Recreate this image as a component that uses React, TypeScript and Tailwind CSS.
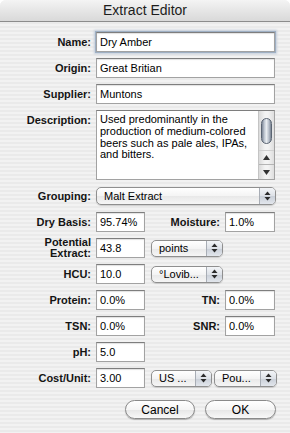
import React from 'react';

const Label = ({ children, w = 'w-[91px]' }: { children: React.ReactNode; w?: string }) => (
    <div className={`${w} shrink-0 text-right text-[11px] font-bold text-[#141414] leading-[13px]`}>{children}</div>
);

const Field = ({ value, w = 'w-[179px]', focus = false }: { value: string; w?: string; focus?: boolean }) => (
    <div
        className={`${w} h-[20px] shrink-0 bg-white border border-[#a2a2a2] border-t-[#7e7e7e] px-[3px] flex items-center text-[11px] text-black whitespace-nowrap overflow-hidden ${focus ? 'shadow-[inset_0_1px_1px_rgba(0,0,0,0.12),0_0_0_1px_#9fb0c4,0_0_2px_2px_#c3cedb]' : 'shadow-[inset_0_1px_1px_rgba(0,0,0,0.12)]'}`}
    >
        {value}
    </div>
);

const Arrows = () => (
    <svg width="7" height="10" viewBox="0 0 7 10">
        <path d="M3.5 0.5 L6.5 4 L0.5 4 Z" fill="#2b2b2b" />
        <path d="M0.5 6 L6.5 6 L3.5 9.5 Z" fill="#2b2b2b" />
    </svg>
);

const Popup = ({ value, w, h = 'h-[17px]' }: { value: string; w: string; h?: string }) => (
    <div
        className={`${w} ${h} shrink-0 flex rounded-[5px] border border-[#8f8f8f] overflow-hidden bg-[linear-gradient(#ffffff,#f4f4f4_50%,#e8e8e8_51%,#f6f6f6)] shadow-[0_1px_1px_rgba(0,0,0,0.15)]`}
    >
        <div className="flex-1 pl-[7px] flex items-center text-[11px] text-black whitespace-nowrap overflow-hidden">{value}</div>
        <div className="w-[16px] border-l border-[#a8adb5] flex items-center justify-center bg-[linear-gradient(#f2f4f7,#dde1e7_50%,#c9cfd8_51%,#e2e6ec)]">
            <Arrows />
        </div>
    </div>
);

const Button = ({ label, w }: { label: string; w: string }) => (
    <div
        className={`${w} h-[19px] rounded-full border border-[#8a8a8a] flex items-center justify-center text-[12px] text-black bg-[linear-gradient(#ffffff,#f5f5f5_50%,#e6e6e6_51%,#f8f8f8)] shadow-[0_1px_1px_rgba(0,0,0,0.25)]`}
    >
        {label}
    </div>
);

export default function App() {
    return (
        <div className="w-[290px] h-[433px] bg-white font-['Liberation_Sans',Arial,sans-serif]">
            <div className="h-full rounded-t-[6px] overflow-hidden flex flex-col bg-[repeating-linear-gradient(180deg,#f2f2f2_0px,#f2f2f2_2px,#eaeaea_2px,#eaeaea_4px)]">
                {/* Title bar */}
                <div className="h-[22px] shrink-0 border-b border-[#8c8c8c] flex items-center justify-center text-[14px] text-[#1c1c1c] bg-[linear-gradient(#f4f4f4,#e6e6e6_50%,#d9d9d9)]">
                    Extract Editor
                </div>

                <div className="flex flex-col gap-[6px] pt-[10px]">
                    <div className="flex items-center gap-[5px] h-[20px]">
                        <Label>Name:</Label>
                        <Field value="Dry Amber" focus />
                    </div>
                    <div className="flex items-center gap-[5px] h-[20px]">
                        <Label>Origin:</Label>
                        <Field value="Great Britian" />
                    </div>
                    <div className="flex items-center gap-[5px] h-[20px]">
                        <Label>Supplier:</Label>
                        <Field value="Muntons" />
                    </div>

                    {/* Description */}
                    <div className="flex items-start gap-[5px] h-[70px]">
                        <div className="pt-[4px]">
                            <Label>Description:</Label>
                        </div>
                        <div className="w-[179px] h-[70px] bg-white border border-[#a2a2a2] border-t-[#7e7e7e] flex">
                            <div className="flex-1 px-[3px] pt-[3px] text-[11px] leading-[11.8px] text-black">
                                Used predominantly in the production of medium-colored beers such as pale ales, IPAs, and bitters.
                            </div>
                            <div className="w-[16px] h-full border-l border-[#c4c4c4] flex flex-col bg-[linear-gradient(90deg,#dadada,#f3f3f3_40%,#f3f3f3_60%,#dedede)]">
                                <div className="flex-1 pt-[7px] flex justify-center">
                                    <div className="w-[11px] h-[26px] rounded-full border border-[#5a6472] bg-[linear-gradient(90deg,#7c8696,#c8cfd8_30%,#e8ecf0_50%,#b0b8c4_80%,#77818f)]" />
                                </div>
                                <div className="h-[14px] border-t border-[#d0d0d0] flex items-center justify-center">
                                    <svg width="7" height="5" viewBox="0 0 7 5"><path d="M3.5 0 L7 5 L0 5 Z" fill="#333" /></svg>
                                </div>
                                <div className="h-[15px] border-t border-[#b4b4b4] flex items-center justify-center">
                                    <svg width="7" height="5" viewBox="0 0 7 5"><path d="M0 0 L7 0 L3.5 5 Z" fill="#333" /></svg>
                                </div>
                            </div>
                        </div>
                    </div>

                    <div className="flex items-center gap-[5px] h-[20px]">
                        <Label>Grouping:</Label>
                        <Popup value="Malt Extract" w="w-[180px]" h="h-[18px]" />
                    </div>

                    <div className="flex items-center gap-[5px] h-[20px]">
                        <Label>Dry Basis:</Label>
                        <Field value="95.74%" w="w-[49px]" />
                        <Label w="w-[70px]">Moisture:</Label>
                        <Field value="1.0%" w="w-[50px]" />
                    </div>

                    <div className="flex items-center gap-[5px] h-[20px]">
                        <div className="w-[91px] shrink-0 text-right text-[11px] font-bold text-[#141414] leading-[11px]">
                            Potential<br />Extract:
                        </div>
                        <Field value="43.8" w="w-[49px]" />
                        <div className="ml-[1px]">
                            <Popup value="points" w="w-[72px]" />
                        </div>
                    </div>

                    <div className="flex items-center gap-[5px] h-[20px]">
                        <Label>HCU:</Label>
                        <Field value="10.0" w="w-[49px]" />
                        <div className="ml-[1px]">
                            <Popup value="°Lovib..." w="w-[72px]" />
                        </div>
                    </div>

                    <div className="flex items-center gap-[5px] h-[20px]">
                        <Label>Protein:</Label>
                        <Field value="0.0%" w="w-[49px]" />
                        <Label w="w-[70px]">TN:</Label>
                        <Field value="0.0%" w="w-[50px]" />
                    </div>

                    <div className="flex items-center gap-[5px] h-[20px]">
                        <Label>TSN:</Label>
                        <Field value="0.0%" w="w-[49px]" />
                        <Label w="w-[70px]">SNR:</Label>
                        <Field value="0.0%" w="w-[50px]" />
                    </div>

                    <div className="flex items-center gap-[5px] h-[20px]">
                        <Label>pH:</Label>
                        <Field value="5.0" w="w-[49px]" />
                    </div>

                    <div className="flex items-center gap-[5px] h-[20px]">
                        <Label>Cost/Unit:</Label>
                        <Field value="3.00" w="w-[49px]" />
                        <div className="ml-[1px] flex gap-[2px]">
                            <Popup value="US ..." w="w-[61px]" />
                            <Popup value="Pou..." w="w-[63px]" />
                        </div>
                    </div>

                    <div className="flex justify-end gap-[10px] pr-[14px] mt-[6px]">
                        <Button label="Cancel" w="w-[70px]" />
                        <Button label="OK" w="w-[71px]" />
                    </div>
                </div>
            </div>
        </div>
    );
}
